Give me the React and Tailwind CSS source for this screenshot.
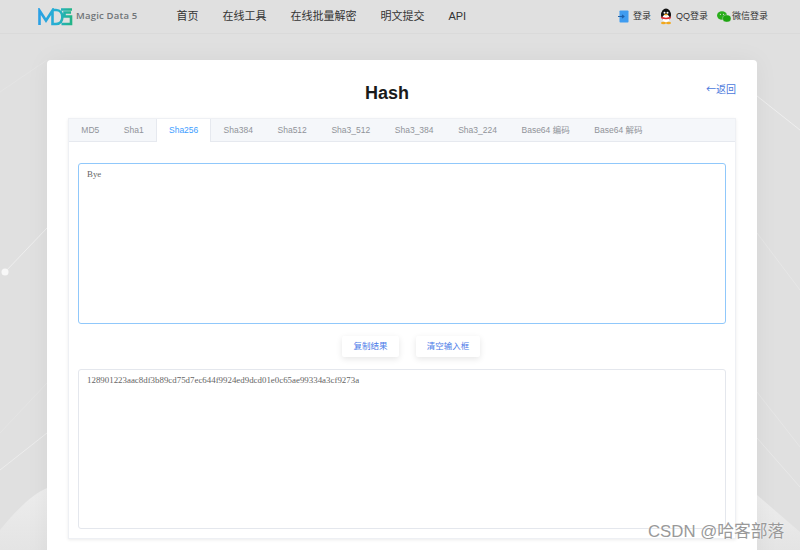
import React from "react";

const sans = "font-['Liberation_Sans','Noto_Sans_CJK_SC',sans-serif]";

const navItems = ["首页", "在线工具", "在线批量解密", "明文提交", "API"];
const tabs = ["MD5", "Sha1", "Sha256", "Sha384", "Sha512", "Sha3_512", "Sha3_384", "Sha3_224", "Base64 编码", "Base64 解码"];

const Logo = () => (
    <svg width="35" height="18" viewBox="0 0 35 18" fill="none">
        <defs>
            <linearGradient id="logoGrad" gradientUnits="userSpaceOnUse" x1="0" y1="0" x2="35" y2="0">
                <stop offset="0" stopColor="#2b9fe6" />
                <stop offset="0.55" stopColor="#25b0d0" />
                <stop offset="1" stopColor="#22b57f" />
            </linearGradient>
        </defs>
        <path
            d="M1.500 17V2.500L8 12.500 14.500 2.500V16h3.500c8.500 0 8.500-14 0-14h-3.500M23 1.500h11M33 4.500h-6.500v4H33v7.500H23.500"
            stroke="url(#logoGrad)"
            strokeWidth="2.600"
        />
    </svg>
);

const LoginIcon = () => (
    <svg width="11" height="13" viewBox="0 0 11 13">
        <rect x="1.500" y="0.500" width="9" height="12" rx="0.800" fill="#3f9cf0" />
        <path d="M0 6.500h5.500M4 4.800l2 1.700-2 1.700" stroke="#1d5fa8" strokeWidth="1.100" fill="none" />
    </svg>
);

const QQIcon = () => (
    <svg width="14" height="17" viewBox="0 0 14 17">
        <ellipse cx="7" cy="7" rx="5" ry="6.500" fill="#111" />
        <ellipse cx="7" cy="10.500" rx="3.700" ry="3.800" fill="#fff" />
        <path d="M2.300 8.500c3 1.500 6.400 1.500 9.400 0l.2 1.800c-3 1.300-6.800 1.300-9.800 0z" fill="#e0282c" />
        <circle cx="5.500" cy="4.800" r="1" fill="#fff" />
        <circle cx="8.500" cy="4.800" r="1" fill="#fff" />
        <ellipse cx="7" cy="6.600" rx="1.800" ry="0.800" fill="#f2a81d" />
        <ellipse cx="4.500" cy="15" rx="2.500" ry="1.200" fill="#f2a81d" />
        <ellipse cx="9.500" cy="15" rx="2.500" ry="1.200" fill="#f2a81d" />
    </svg>
);

const WechatIcon = () => (
    <svg width="14" height="12" viewBox="0 0 14 12">
        <ellipse cx="5" cy="4.500" rx="5" ry="4.200" fill="#2aae1c" />
        <ellipse cx="9.800" cy="7.500" rx="4.200" ry="3.600" fill="#1fa512" stroke="#e0e0e0" strokeWidth="0.400" />
        <circle cx="3.400" cy="3.300" r="0.600" fill="#e0e0e0" />
        <circle cx="6.500" cy="3.300" r="0.600" fill="#e0e0e0" />
    </svg>
);

// page background decoration
const BackgroundLines = () => (
    <svg className="absolute inset-0" width="800" height="550" viewBox="0 0 800 550" fill="none">
        <defs>
            <linearGradient id="waveLeft" x1="0" y1="0" x2="0" y2="1">
                <stop offset="0" stopColor="#ededed" />
                <stop offset="1" stopColor="#e4e4e4" />
            </linearGradient>
        </defs>
        <path d="M0 550V530C18 508 33 494 47 488V550Z" fill="url(#waveLeft)" />
        <path d="M757 495L800 532V550H757Z" fill="url(#waveLeft)" />
        <path d="M5 272L47 228" stroke="#eeeeee" strokeWidth="1" />
        <path d="M0 433L47 383" stroke="#e4e4e4" strokeWidth="1" />
        <path d="M0 470L47 433" stroke="#ececec" strokeWidth="1" />
        <path d="M757 96L800 130" stroke="#eeeeee" strokeWidth="1" />
        <path d="M757 233L800 290" stroke="#e6e6e6" strokeWidth="1" />
        <path d="M757 392L800 447" stroke="#e6e6e6" strokeWidth="1" />
        <path d="M757 438L800 487" stroke="#e8e8e8" strokeWidth="1" />
        <path d="M0 92L47 60" stroke="#e4e4e4" strokeWidth="1" />
        <circle cx="5" cy="272" r="3.500" fill="#f8f8f8" />
    </svg>
);

const App = () => {
    return (
        <div className={`relative w-[800px] h-[550px] overflow-hidden bg-[#e0e0e0] ${sans}`}>
            <BackgroundLines />

            <header className="relative flex items-center h-[34px] pl-[38px] pr-[32px] bg-[#e0e0e0] border-b border-[#dadada]">
                <Logo />
                <span className="ml-[3px] text-[9.500px] font-semibold text-[#6f7478] tracking-[0.2px] font-['Open_Sans',sans-serif]">Magic Data 5</span>
                <nav className="flex gap-6 ml-[39px] text-[11px] text-[#333]">
                    {navItems.map((item) => (
                        <span key={item}>{item}</span>
                    ))}
                </nav>
                <div className="flex items-center ml-auto text-[9px] text-[#333]">
                    <LoginIcon />
                    <span className="ml-[4px] mr-[8px]">登录</span>
                    <QQIcon />
                    <span className="ml-[3px] mr-[9px]">QQ登录</span>
                    <WechatIcon />
                    <span className="ml-[1px]">微信登录</span>
                </div>
            </header>

            <main className="relative ml-[47px] mt-[26px] w-[710px] h-[600px] bg-white rounded-[4px] px-[21px] shadow-[0_0_24px_rgba(0,0,0,0.05)]">
                <div className="relative flex justify-center pt-[22px] pr-[30px] h-[58px]">
                    <h1 className="text-[18px] leading-[23px] font-bold text-[#1a1a1a]">Hash</h1>
                    <a className="absolute right-0 top-[21px] text-[10px] leading-[15px] text-[#4a78dc] font-['Noto_Sans_CJK_SC',sans-serif]">←返回</a>
                </div>

                <section className="w-[668px] h-[421px] border border-[#eef0f4] shadow-[0_1px_3px_rgba(0,0,0,0.08)]">
                    <div className="flex h-[23px] bg-[#f5f7fa] border-b border-[#e6e9ef] text-[8.500px]">
                        {tabs.map((tab) => (
                            <span
                                key={tab}
                                className={
                                    tab === "Sha256"
                                        ? "flex items-center px-[12px] h-[23px] bg-white text-[#409eff] border-x border-[#e6e9ef]"
                                        : "flex items-center px-[12.300px] text-[#909399]"
                                }
                            >
                                {tab}
                            </span>
                        ))}
                    </div>

                    <div className="flex flex-col px-[9px] pt-[21px]">
                        <textarea
                            readOnly
                            value="Bye"
                            className="block w-[648px] h-[161px] px-[8px] py-[4px] border border-[#90c8fb] rounded-[3px] bg-white resize-none outline-none text-[8.900px] text-[#666] font-['Liberation_Serif',serif]"
                        />
                        <div className="flex justify-center gap-[17px] mt-[12px] ml-[18px]">
                            <button className="w-[57px] h-[21px] bg-white rounded-[2px] text-[8.500px] text-[#4a7be8] shadow-[0_2px_6px_rgba(0,0,0,0.1)]">复制结果</button>
                            <button className="w-[64px] h-[21px] bg-white rounded-[2px] text-[8.500px] text-[#4a7be8] shadow-[0_2px_6px_rgba(0,0,0,0.1)]">清空输入框</button>
                        </div>
                        <textarea
                            readOnly
                            value="128901223aac8df3b89cd75d7ec644f9924ed9dcd01e0c65ae99334a3cf9273a"
                            className="block w-[648px] h-[160px] mt-[12px] px-[8px] py-[4px] border border-[#e4e7ed] rounded-[3px] bg-white resize-none outline-none text-[8.900px] text-[#666] font-['Liberation_Serif',serif]"
                        />
                    </div>
                </section>
            </main>

            <span className="absolute left-[648px] top-[522px] text-[16.800px] leading-[20px] text-[#999] [text-shadow:0_0_2px_#fff]">CSDN @哈客部落</span>
        </div>
    );
};

export default App;
